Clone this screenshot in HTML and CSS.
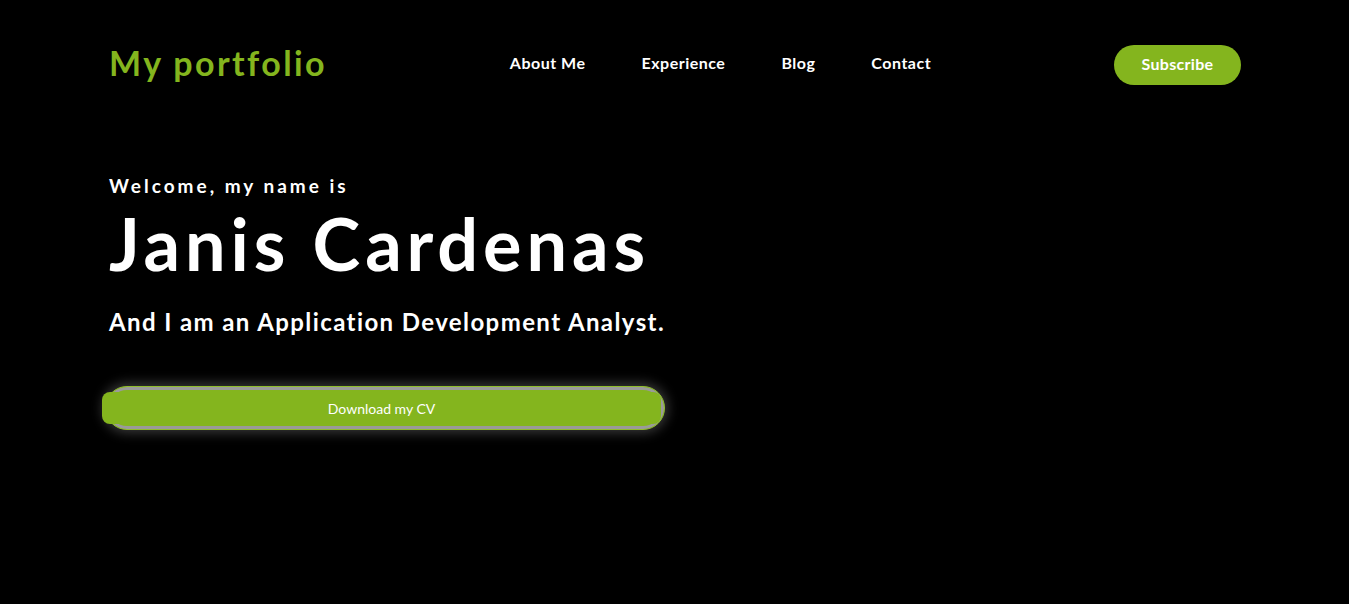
FILE: index.html
```html
<!DOCTYPE html>
<html lang="en">
<head>
<meta charset="utf-8">
<title>My portfolio</title>
<link rel="stylesheet" href="styles.css">
</head>
<body>
<div class="page">
  <header class="header">
    <div class="logo">My portfolio</div>
    <nav class="nav">
      <a href="#">About Me</a>
      <a href="#">Experience</a>
      <a href="#">Blog</a>
      <a href="#">Contact</a>
    </nav>
    <a class="subscribe" href="#">Subscribe</a>
  </header>
  <section class="hero">
    <p class="welcome">Welcome, my name is</p>
    <h1 class="name">Janis Cardenas</h1>
    <p class="role">And I am an Application Development Analyst.</p>
    <div class="cv-wrap">
      <div class="cv-inner">Download my CV</div>
    </div>
  </section>
</div>
</body>
</html>
```
FILE: styles.css
```css
* { box-sizing: border-box; }
html, body { margin: 0; padding: 0; background: #000; }
body {
  font-family: Lato, "Noto Sans", sans-serif;
  font-variant-ligatures: none;
  color: #fff;
  height: 604px;
  overflow: hidden;
}
.page { padding: 0 108px 0 109px; }
.header {
  height: 128px;
  display: flex;
  align-items: center;
  justify-content: space-between;
}
.logo {
  color: #84b51e;
  font-size: 34px;
  font-weight: 700;
  letter-spacing: 2.4px;
  margin-top: -4px;
}
.nav { display: flex; gap: 56px; margin-top: -4px; }
.nav a {
  color: #fff;
  text-decoration: none;
  font-weight: 700;
  font-size: 16px;
  letter-spacing: 0.5px;
}
.subscribe {
  background: #84b51e;
  color: #fff;
  text-decoration: none;
  font-weight: 700;
  font-size: 16px;
  letter-spacing: 0.3px;
  height: 40px;
  width: 127px;
  border-radius: 20px;
  display: flex;
  align-items: center;
  justify-content: center;
  margin-top: 2px;
  padding-bottom: 3px;
}
.hero { padding-top: 44px; }
.welcome {
  margin: 0;
  font-size: 19px;
  font-weight: 700;
  letter-spacing: 3px;
  line-height: 28px;
}
.name {
  margin: 0;
  font-size: 72px;
  font-weight: 700;
  line-height: 86px;
  letter-spacing: 4.9px;
}
.role {
  margin: 21px 0 0;
  font-size: 24px;
  font-weight: 700;
  line-height: 30px;
  letter-spacing: 1.4px;
}
.cv-wrap {
  margin-top: 49px;
  margin-left: -4px;
  width: 560px;
  height: 44px;
  border: 1px solid #8fbd2c;
  border-radius: 22px;
  box-shadow: 0 0 12px 3px rgba(255,255,255,0.22), inset 0 0 0 3px #9a9a9a;
  background: #84b51e;
  display: flex;
  align-items: center;
}
.cv-inner {
  margin-left: -4px;
  width: 559px;
  height: 32px;
  border-radius: 8px;
  background: #84b51e;
  font-size: 14px;
  display: flex;
  align-items: center;
  justify-content: center;
}
```
